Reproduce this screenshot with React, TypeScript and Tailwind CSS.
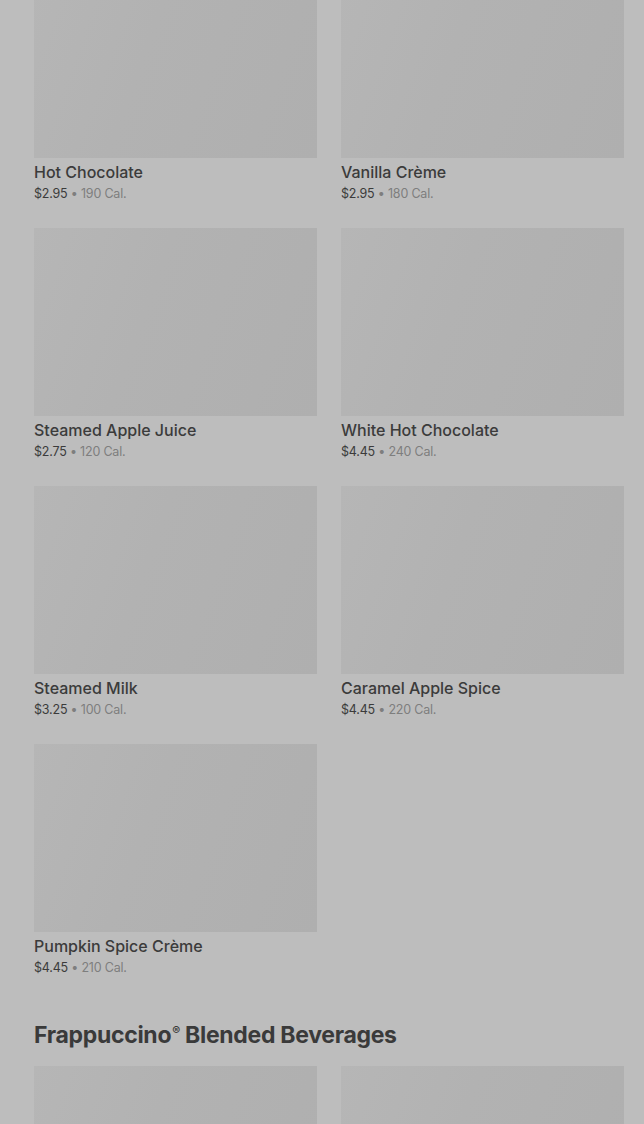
import React from "react";

type Item = { name: string; price: string; cal: string };

const items: Item[] = [
  { name: "Hot Chocolate", price: "$2.95", cal: "190 Cal." },
  { name: "Vanilla Crème", price: "$2.95", cal: "180 Cal." },
  { name: "Steamed Apple Juice", price: "$2.75", cal: "120 Cal." },
  { name: "White Hot Chocolate", price: "$4.45", cal: "240 Cal." },
  { name: "Steamed Milk", price: "$3.25", cal: "100 Cal." },
  { name: "Caramel Apple Spice", price: "$4.45", cal: "220 Cal." },
  { name: "Pumpkin Spice Crème", price: "$4.45", cal: "210 Cal." },
];

function Card({ item }: { item: Item }) {
  return (
    <div className="flex flex-col">
      <div className="h-[188px] w-full bg-[linear-gradient(110deg,#b6b6b6_0%,#b2b2b2_40%,#afafaf_100%)]" />
      <div className="mt-[2px] text-[16px] leading-[24px] font-medium text-[#3b3b3b]">
        {item.name}
      </div>
      <div className="text-[12.5px] leading-[20px] tracking-[-0.2px]">
        <span className="text-[#3b3b3b]">{item.price}</span>
        <span className="text-[#7e7e7e]"> • {item.cal}</span>
      </div>
    </div>
  );
}

export default function App() {
  return (
    <div
      className="min-h-[1124px] w-[644px] overflow-hidden bg-[#bdbdbd] pl-[34px] pr-[20px]"
      style={{ fontFamily: "Inter, 'Noto Sans', sans-serif" }}
    >
      <div className="mt-[-30px] grid grid-cols-2 gap-x-[24px] gap-y-[24px]">
        {items.map((it) => (
          <Card key={it.name} item={it} />
        ))}
      </div>
      <h2 className="mt-[41px] text-[23px] leading-[32px] font-bold text-[#3a3a3a] tracking-[-0.3px]">
        Frappuccino<span className="text-[12px] font-semibold relative top-[-8px] ml-[1px]">®</span> Blended Beverages
      </h2>
      <div className="mt-[11px] grid grid-cols-2 gap-x-[24px]">
        <div className="h-[188px] bg-[linear-gradient(110deg,#b6b6b6_0%,#b2b2b2_40%,#afafaf_100%)]" />
        <div className="h-[188px] bg-[linear-gradient(110deg,#b6b6b6_0%,#b2b2b2_40%,#afafaf_100%)]" />
      </div>
    </div>
  );
}
